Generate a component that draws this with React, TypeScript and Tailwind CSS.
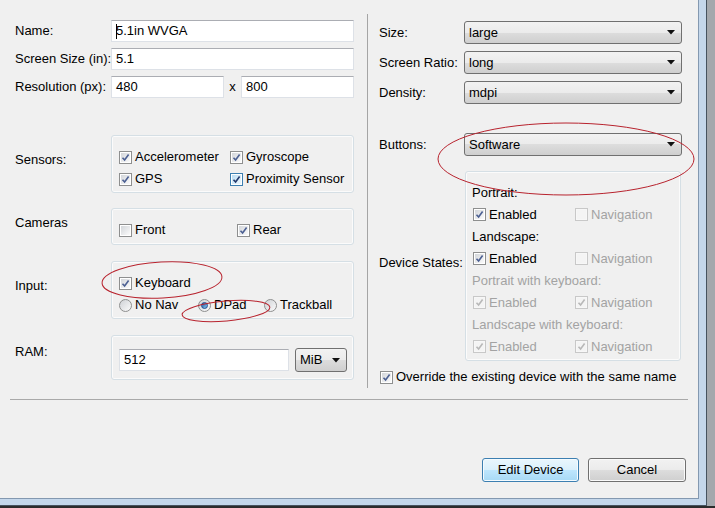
import React from "react";

const font = { fontFamily: '"Liberation Sans", Arial, sans-serif' };

const Check = ({ checked, disabled, hot }: { checked?: boolean; disabled?: boolean; hot?: boolean }) => (
  <span
    className={`flex h-[13px] w-[13px] shrink-0 p-px border ${
      disabled ? "border-[#c8c8c8] bg-[#f7f7f7]" : hot ? "border-[#3c7fb1] bg-white" : "border-[#8e8f8f] bg-white"
    }`}
  >
    <span
      className={`flex h-full w-full items-center justify-center ${
        disabled
          ? "bg-[#f4f4f4]"
          : hot
          ? "bg-linear-to-br from-[#b9dcf3] to-[#eef7fd]"
          : "bg-linear-to-br from-[#d3d6da] to-[#fbfbfb]"
      }`}
    >
      {checked && (
        <svg width="9" height="9" viewBox="0 0 9 9">
          <path
            d="M1.5 4.8 L3.6 7 L7.6 1.6"
            fill="none"
            stroke={disabled ? "#b8b8b8" : hot ? "#22386b" : "#4b5f92"}
            strokeWidth="1.6"
          />
        </svg>
      )}
    </span>
  </span>
);

const CheckItem = ({
  label,
  checked,
  disabled,
  hot,
  className = "",
}: {
  label: string;
  checked?: boolean;
  disabled?: boolean;
  hot?: boolean;
  className?: string;
}) => (
  <div className={`flex items-center gap-[3px] ${className}`}>
    <Check checked={checked} disabled={disabled} hot={hot} />
    <span className={disabled ? "text-[#a3a3a3]" : "text-black"}>{label}</span>
  </div>
);

const Radio = ({ label, selected, className = "" }: { label: string; selected?: boolean; className?: string }) => (
  <div className={`flex items-center gap-[3px] ${className}`}>
    <span className="flex h-[13px] w-[13px] shrink-0 items-center justify-center rounded-full border border-[#8e8f8f] bg-linear-to-br from-[#cfd2d6] to-[#fbfbfb]">
      {selected && (
        <span className="h-[7px] w-[7px] rounded-full border border-[#1d4f8f] bg-linear-to-br from-[#1f5fa8] to-[#8cc3ec]" />
      )}
    </span>
    <span>{label}</span>
  </div>
);

const TextBox = ({ value, className = "", caret }: { value: string; className?: string; caret?: boolean }) => (
  <div
    className={`flex h-[22px] shrink-0 items-center border border-[#dde1e7] border-t-[#abadb3] bg-white pl-[4px] ${className}`}
  >
    {caret && <span className="h-[15px] w-px bg-black" />}
    <span className={caret ? "-ml-px" : ""}>{value}</span>
  </div>
);

const Arrow = () => (
  <svg width="8" height="5" viewBox="0 0 8 5" className="shrink-0">
    <path d="M0 0 H8 L4 4.5 Z" fill="#111" />
  </svg>
);

const Combo = ({ value, className = "" }: { value: string; className?: string }) => (
  <div
    className={`flex h-[23px] shrink-0 items-center justify-between rounded-[3px] border border-[#707070] bg-[linear-gradient(#f2f2f2,#ebebeb_50%,#dddddd_50%,#cfcfcf)] pl-[4px] pr-[6px] ${className}`}
  >
    <span>{value}</span>
    <Arrow />
  </div>
);

const Group = ({ className = "", children }: { className?: string; children: React.ReactNode }) => (
  <div className={`shrink-0 rounded-[3px] border border-[#d5dfe5] shadow-[inset_0_0_0_1px_#fbfbfb] ${className}`}>
    {children}
  </div>
);

export default function App() {
  return (
    <div
      className="flex h-[508px] w-[715px] flex-col whitespace-nowrap bg-[#2c2c2c] text-[13px] leading-[16px] text-black"
      style={font}
    >
      <div className="flex h-[506px]">
        <div className="h-[506px] w-[707px] border-r border-b border-[#46535f] bg-[#c4d7eb]">
          <div className="relative flex h-[499px] w-[699px] flex-col border-r border-b border-[#8398b0] bg-[#f0f0f0]">
            <div className="flex h-[388px]">
              {/* left column */}
              <div className="flex w-[367px] flex-col pl-[15px] pt-[20px]">
                <div className="flex items-center">
                  <span className="w-[96px]">Name:</span>
                  <TextBox value="5.1in WVGA" caret className="w-[243px]" />
                </div>
                <div className="mt-[6px] flex items-center">
                  <span className="w-[96px]">Screen Size (in):</span>
                  <TextBox value="5.1" className="w-[243px]" />
                </div>
                <div className="mt-[6px] flex items-center">
                  <span className="w-[96px]">Resolution (px):</span>
                  <TextBox value="480" className="w-[113px]" />
                  <span className="w-[17px] text-center">x</span>
                  <TextBox value="800" className="w-[113px]" />
                </div>

                <div className="mt-[37px] flex">
                  <span className="w-[96px] pt-[17px]">Sensors:</span>
                  <Group className="h-[58px] w-[243px] pl-[7px] pt-[10px]">
                    <div className="flex h-[22px] items-center">
                      <CheckItem label="Accelerometer" checked className="w-[111px]" />
                      <CheckItem label="Gyroscope" checked />
                    </div>
                    <div className="flex h-[22px] items-center">
                      <CheckItem label="GPS" checked className="w-[111px]" />
                      <CheckItem label="Proximity Sensor" checked hot />
                    </div>
                  </Group>
                </div>

                <div className="mt-[15px] flex">
                  <span className="w-[96px] pt-[7px]">Cameras</span>
                  <Group className="h-[37px] w-[243px] pl-[7px] pt-[10px]">
                    <div className="flex h-[22px] items-center">
                      <CheckItem label="Front" className="w-[118px]" />
                      <CheckItem label="Rear" checked />
                    </div>
                  </Group>
                </div>

                <div className="mt-[16px] flex">
                  <span className="w-[96px] pt-[17px]">Input:</span>
                  <Group className="h-[58px] w-[243px] pl-[7px] pt-[10px]">
                    <div className="flex h-[22px] items-center">
                      <CheckItem label="Keyboard" checked />
                    </div>
                    <div className="flex h-[22px] items-center">
                      <Radio label="No Nav" className="w-[79px]" />
                      <Radio label="DPad" selected className="w-[66px]" />
                      <Radio label="Trackball" />
                    </div>
                  </Group>
                </div>

                <div className="mt-[16px] flex">
                  <span className="w-[96px] pt-[9px]">RAM:</span>
                  <Group className="flex h-[45px] w-[243px] items-start gap-[6px] pl-[7px] pt-[13px]">
                    <TextBox value="512" className="w-[170px]" />
                    <Combo value="MiB" className="-mt-px h-[24px] w-[52px] pl-[3px]" />
                  </Group>
                </div>
              </div>

              <div className="mt-[14px] w-px bg-[#a5a5a5]" />

              {/* right column */}
              <div className="flex flex-1 flex-col pl-[11px] pt-[21px]">
                <div className="flex items-center">
                  <span className="w-[85px]">Size:</span>
                  <Combo value="large" className="w-[218px]" />
                </div>
                <div className="mt-[7px] flex items-center">
                  <span className="w-[85px]">Screen Ratio:</span>
                  <Combo value="long" className="w-[218px]" />
                </div>
                <div className="mt-[7px] flex items-center">
                  <span className="w-[85px]">Density:</span>
                  <Combo value="mdpi" className="w-[218px]" />
                </div>
                <div className="mt-[29px] flex items-center">
                  <span className="w-[85px]">Buttons:</span>
                  <Combo value="Software" className="w-[218px]" />
                </div>
                <div className="mt-[15px] flex items-center">
                  <span className="w-[86px] pb-[6px]">Device States:</span>
                  <Group className="h-[190px] w-[216px] pl-[6px] pt-[10px]">
                    <div className="flex h-[21px] items-center">Portrait:</div>
                    <div className="flex h-[23px] items-center pl-px">
                      <CheckItem label="Enabled" checked className="w-[102px]" />
                      <CheckItem label="Navigation" disabled />
                    </div>
                    <div className="flex h-[21px] items-center">Landscape:</div>
                    <div className="flex h-[23px] items-center pl-px">
                      <CheckItem label="Enabled" checked className="w-[102px]" />
                      <CheckItem label="Navigation" disabled />
                    </div>
                    <div className="flex h-[21px] items-center text-[#a3a3a3]">Portrait with keyboard:</div>
                    <div className="flex h-[23px] items-center pl-px">
                      <CheckItem label="Enabled" checked disabled className="w-[102px]" />
                      <CheckItem label="Navigation" checked disabled />
                    </div>
                    <div className="flex h-[21px] items-center text-[#a3a3a3]">Landscape with keyboard:</div>
                    <div className="flex h-[23px] items-center pl-px">
                      <CheckItem label="Enabled" checked disabled className="w-[102px]" />
                      <CheckItem label="Navigation" checked disabled />
                    </div>
                  </Group>
                </div>
                <div className="ml-px mt-[8px] flex h-[16px] items-center">
                  <CheckItem label="Override the existing device with the same name" checked />
                </div>
              </div>
            </div>

            <div className="mx-[10px] mt-[11px] h-px bg-[#a9a9a9]" />

            <div className="mt-[58px] flex justify-end gap-[9px] pr-[12px]">
              <button className="h-[24px] w-[97px] rounded-[3px] border border-[#3c7fb1] bg-[linear-gradient(#eaf6fd,#d9f0fc_50%,#bee6fd_50%,#a7d9f5)] shadow-[inset_0_0_0_1px_#f4fbff]">
                Edit Device
              </button>
              <button className="h-[24px] w-[98px] rounded-[3px] border border-[#707070] bg-[linear-gradient(#f2f2f2,#ebebeb_50%,#dddddd_50%,#cfcfcf)] shadow-[inset_0_0_0_1px_#fafafa]">
                Cancel
              </button>
            </div>

            {/* hand-drawn annotation marks */}
            <svg className="pointer-events-none absolute inset-0" width="698" height="498">
              <g fill="none" stroke="#b8232e" strokeWidth="1">
                <ellipse cx="162" cy="280" rx="60" ry="18" transform="rotate(-3 162 280)" />
                <ellipse cx="226" cy="311" rx="44" ry="10" transform="rotate(-5 226 311)" />
                <ellipse cx="566" cy="159" rx="128" ry="36" />
              </g>
            </svg>
          </div>
        </div>
        <div className="flex-1 bg-[#a4a8ad]" />
      </div>
    </div>
  );
}
